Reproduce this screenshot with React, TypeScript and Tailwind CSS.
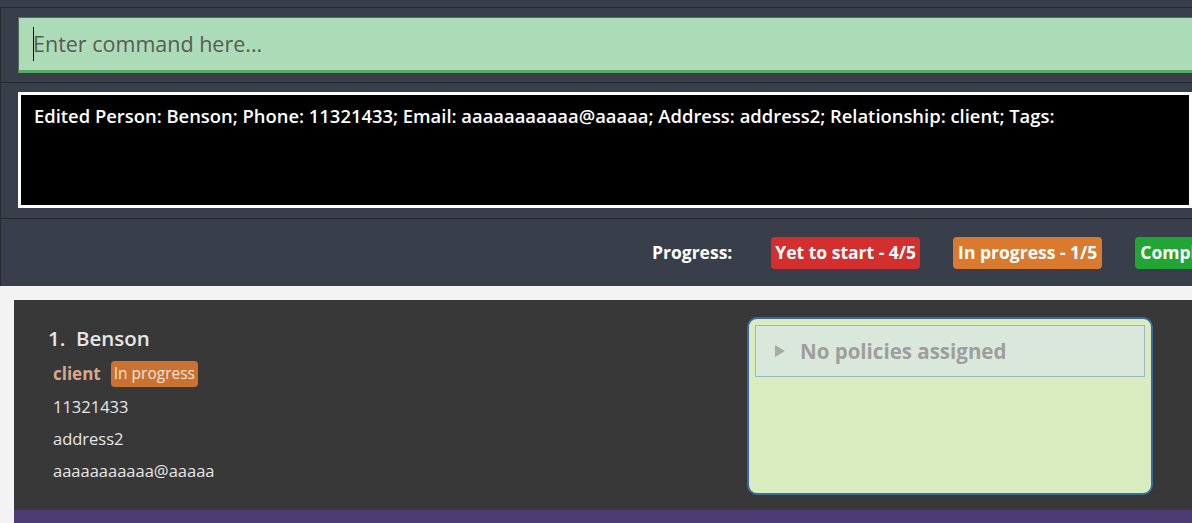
import React from "react";

const font = { fontFamily: '"Open Sans", "Noto Sans", sans-serif' };

function ProgressBar() {
  return (
    <div className="h-[68px] border-t border-l border-[#262b33] bg-[#383e4a] flex items-center pl-[651px] whitespace-nowrap overflow-hidden">
      <span className="text-white font-bold text-[17.5px] mr-[39px]">Progress:</span>
      <span className="bg-[#d32f2f] text-white font-bold text-[17.5px] rounded-[4px] px-[4px] h-[32px] flex items-center mr-[33px]">
        Yet to start - 4/5
      </span>
      <span className="bg-[#d97a2f] text-white font-bold text-[17.5px] rounded-[4px] px-[5px] h-[32px] flex items-center mr-[33px]">
        In progress - 1/5
      </span>
      <span className="bg-[#21a636] text-white font-bold text-[17.5px] rounded-[4px] px-[5px] h-[32px] flex items-center">
        Completed - 0/5
      </span>
    </div>
  );
}

function PersonCard() {
  return (
    <div className="bg-[#383838] h-[210px] flex">
      <div className="w-[733px] pl-[34px] pt-[24px]">
        <div className="text-[#e6e6e6] text-[20.5px] font-semibold leading-[28px]">
          1.&nbsp;&nbsp;Benson
        </div>
        <div className="flex items-center mt-[8px] pl-[5px] h-[28px]">
          <span className="text-[#d9a88a] text-[17px] font-bold mr-[10px]">client</span>
          <span className="bg-[#cb7233] text-[#f3e3d3] text-[15.5px] rounded-[4px] px-[3px] h-[26px] flex items-center">
            In progress
          </span>
        </div>
        <div className="pl-[5px] text-[#e6e6e6] text-[16.5px] leading-[32px] mt-[3px]">
          <div>11321433</div>
          <div>address2</div>
          <div>aaaaaaaaaaa@aaaaa</div>
        </div>
      </div>
      <div className="pt-[17px]">
        <div className="w-[406px] h-[178px] bg-[#d9ecc0] border-2 border-[#3a6aa0] rounded-[10px] p-[6px]">
          <div className="h-[52px] bg-[#d9e8da] border border-[#9db8c0] flex items-center pl-[18px]">
            <svg width="12" height="14" viewBox="0 0 12 14" className="mr-[14px]">
              <path d="M1 1 L11 7 L1 13 Z" fill="#a8a8a8" />
            </svg>
            <span className="text-[#9e9e9e] text-[20.5px] font-bold">No policies assigned</span>
          </div>
        </div>
      </div>
    </div>
  );
}

export default function App() {
  return (
    <div className="w-[1192px] h-[523px] overflow-hidden bg-[#f3f3f3]" style={font}>
      <div className="bg-[#383e4a] pt-[7px]">
        <div className="h-[75px] border-t border-l border-[#262b33] pl-[17px] pt-[9px]">
          <div className="h-[56px] bg-[#acdcb7] border-b-[3px] border-[#56a865] border-t border-t-[#5b6a5a] border-l border-l-[#5b6a5a] flex items-center pl-[14px] relative">
            <span className="absolute left-[14px] top-[9px] w-px h-[34px] bg-black" />
            <span className="text-[#595959] text-[21.5px]">Enter command here...</span>
          </div>
        </div>
        <div className="h-[136px] border-t border-l border-[#262b33] pl-[17px] pt-[9px]">
          <div className="h-[116px] bg-black border-[3px] border-white pl-[13px] pt-[7px]">
            <span className="text-white text-[18.4px] font-semibold whitespace-nowrap">
              Edited Person: Benson; Phone: 11321433; Email: aaaaaaaaaaa@aaaaa; Address: address2; Relationship: client; Tags:
            </span>
          </div>
        </div>
        <ProgressBar />
      </div>
      <div className="pt-[14px] pl-[14px]">
        <PersonCard />
        <div className="h-[20px] bg-[#4c3b74]" />
      </div>
    </div>
  );
}
